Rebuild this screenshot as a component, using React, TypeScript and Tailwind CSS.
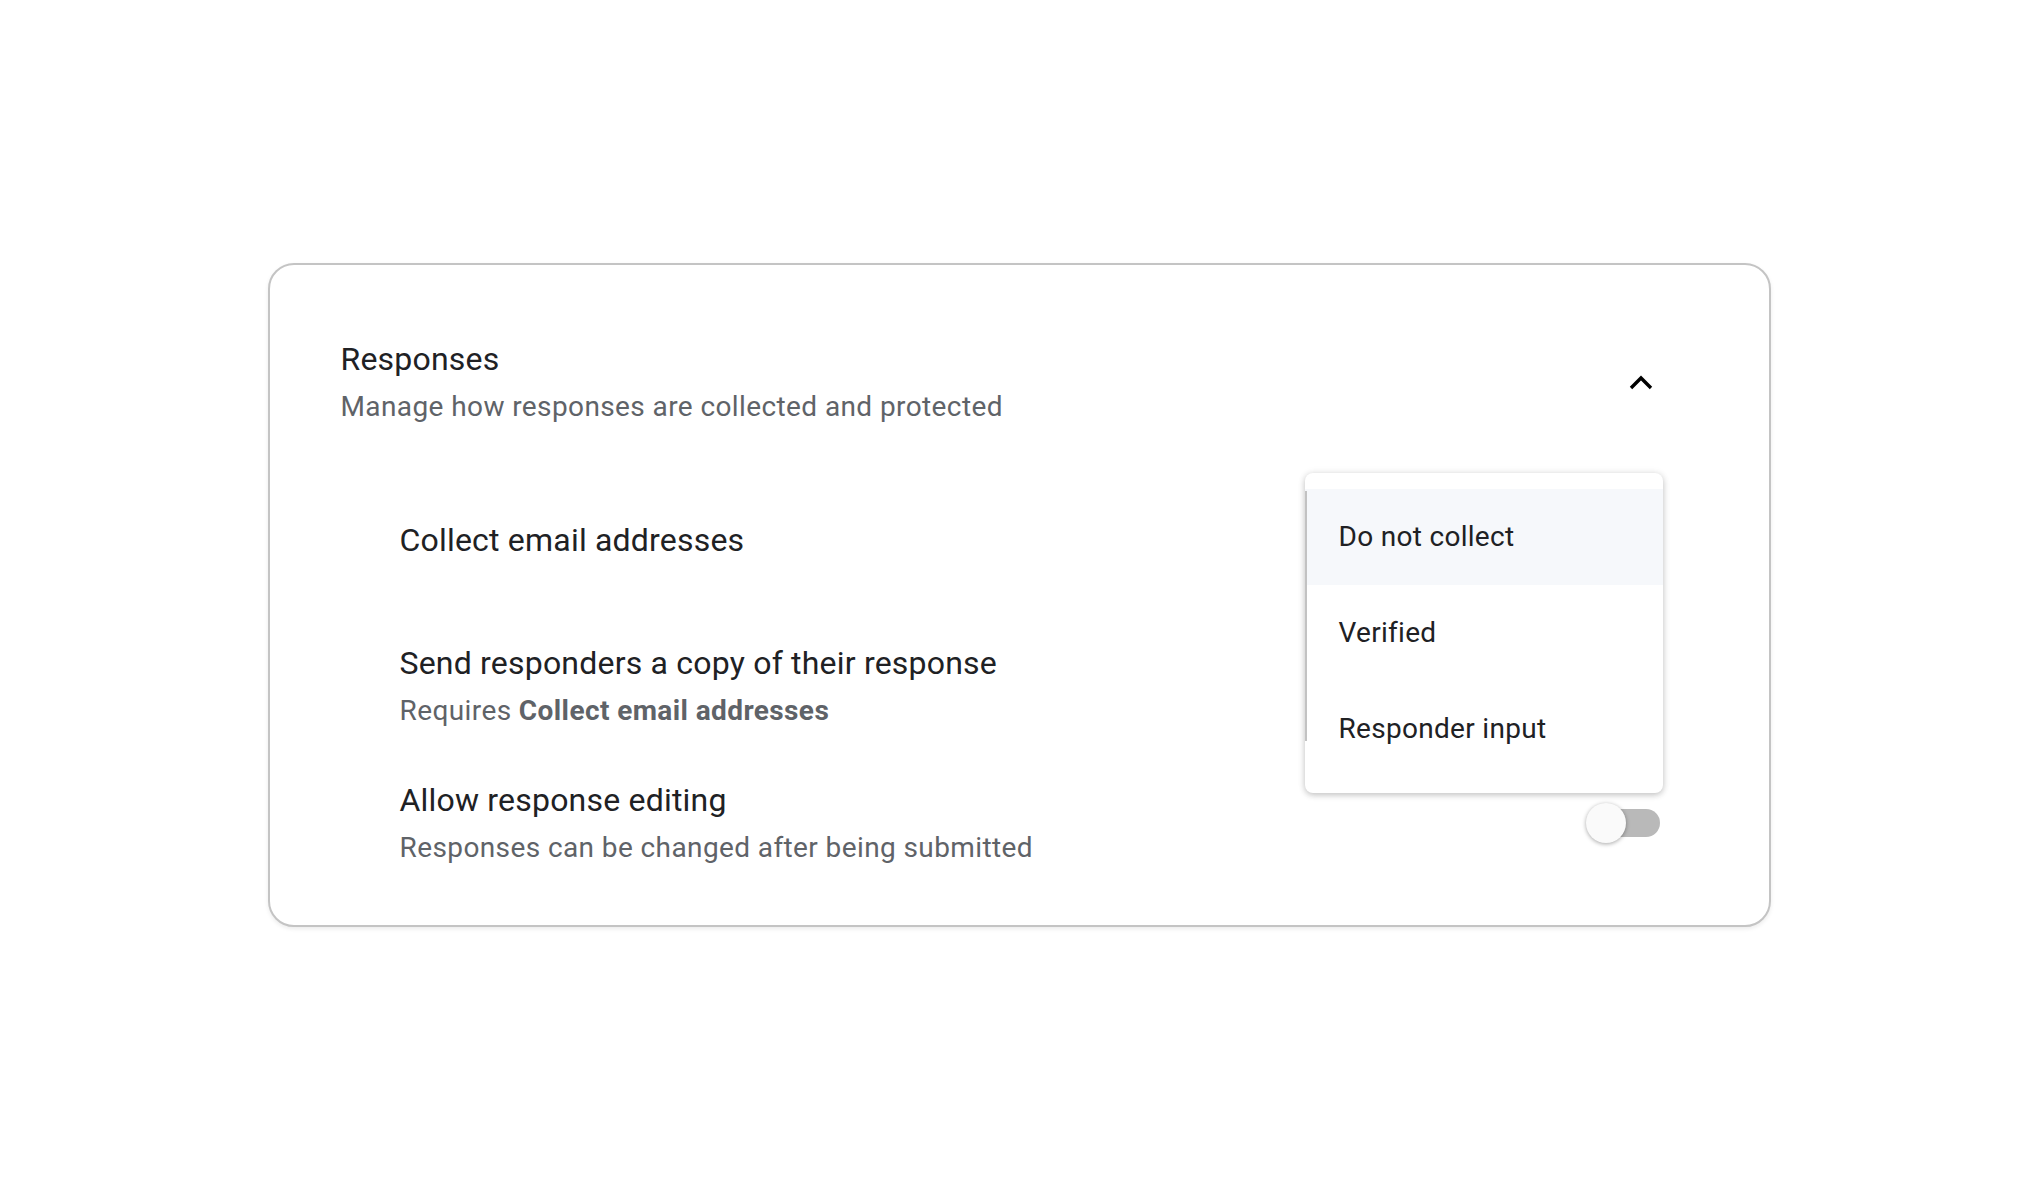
import React from "react";

function ChevronUp() {
  return (
    <svg width="24" height="15" viewBox="0 0 24 15" className="block">
      <polyline points="2,13 12,3 22,13" fill="none" stroke="#000" strokeWidth="3.4" />
    </svg>
  );
}

function Toggle() {
  return (
    <div className="relative w-[74px] h-[40px] flex items-center justify-end">
      <div className="w-[68px] h-[28px] rounded-full bg-[#b9b9b9]" />
      <div className="absolute left-0 top-0 w-[40px] h-[40px] rounded-full bg-[#fafafa] shadow-[0_1px_4px_rgba(0,0,0,0.35)]" />
    </div>
  );
}

export default function App() {
  const items = ["Do not collect", "Verified", "Responder input"];
  return (
    <div
      className="w-full min-h-[1198px] bg-white flex items-start justify-center pt-[263px]"
      style={{ fontFamily: "Roboto, 'Noto Sans', Arial, sans-serif" }}
    >
      <div className="relative w-[1503px] border-2 border-[#c4c4c4] rounded-[26px] bg-white shadow-[0_2px_4px_rgba(0,0,0,0.08)] pl-[71px] pr-[71px] pt-[74px] pb-[59px]">
        {/* Header */}
        <div className="flex items-center justify-between pr-[45px]">
          <div className="flex flex-col gap-[10px]">
            <div className="text-[32px] leading-[40px] tracking-[0.2px] text-[#202124]">Responses</div>
            <div className="text-[28px] leading-[36px] tracking-[0.4px] text-[#5f6368]">
              Manage how responses are collected and protected
            </div>
          </div>
          <ChevronUp />
        </div>

        {/* Rows */}
        <div className="pl-[59px] pr-[38px]">
          <div className="mt-[95px] flex items-center h-[40px]">
            <div className="text-[32px] leading-[40px] tracking-[0.2px] text-[#202124]">
              Collect email addresses
            </div>
          </div>

          <div className="mt-[83px] flex flex-col gap-[10px]">
            <div className="text-[32px] leading-[40px] tracking-[0.2px] text-[#202124]">
              Send responders a copy of their response
            </div>
            <div className="text-[28px] leading-[36px] tracking-[0.4px] text-[#5f6368]">
              Requires <span className="font-bold">Collect email addresses</span>
            </div>
          </div>

          <div className="mt-[51px] flex items-center justify-between">
            <div className="flex flex-col gap-[10px]">
              <div className="text-[32px] leading-[40px] tracking-[0.2px] text-[#202124]">
                Allow response editing
              </div>
              <div className="text-[28px] leading-[36px] tracking-[0.4px] text-[#5f6368]">
                Responses can be changed after being submitted
              </div>
            </div>
            <Toggle />
          </div>
        </div>

        {/* Dropdown menu */}
        <div className="absolute left-[1035px] top-[208px] w-[358px] rounded-[8px] bg-white shadow-[0_2px_6px_rgba(0,0,0,0.22),0_0_10px_rgba(0,0,0,0.06)] py-[16px]">
          <div className="absolute left-0 top-[18px] w-[2px] h-[250px] bg-[#c2c2c2]" />
          {items.map((it, i) => (
            <div
              key={it}
              className={
                i === 0
                  ? "h-[96px] flex items-center pl-[34px] bg-[#f6f8fb] text-[28px] tracking-[0.3px] text-[#202124]"
                  : "h-[96px] flex items-center pl-[34px] text-[28px] tracking-[0.3px] text-[#202124]"
              }
            >
              {it}
            </div>
          ))}
        </div>
      </div>
    </div>
  );
}
